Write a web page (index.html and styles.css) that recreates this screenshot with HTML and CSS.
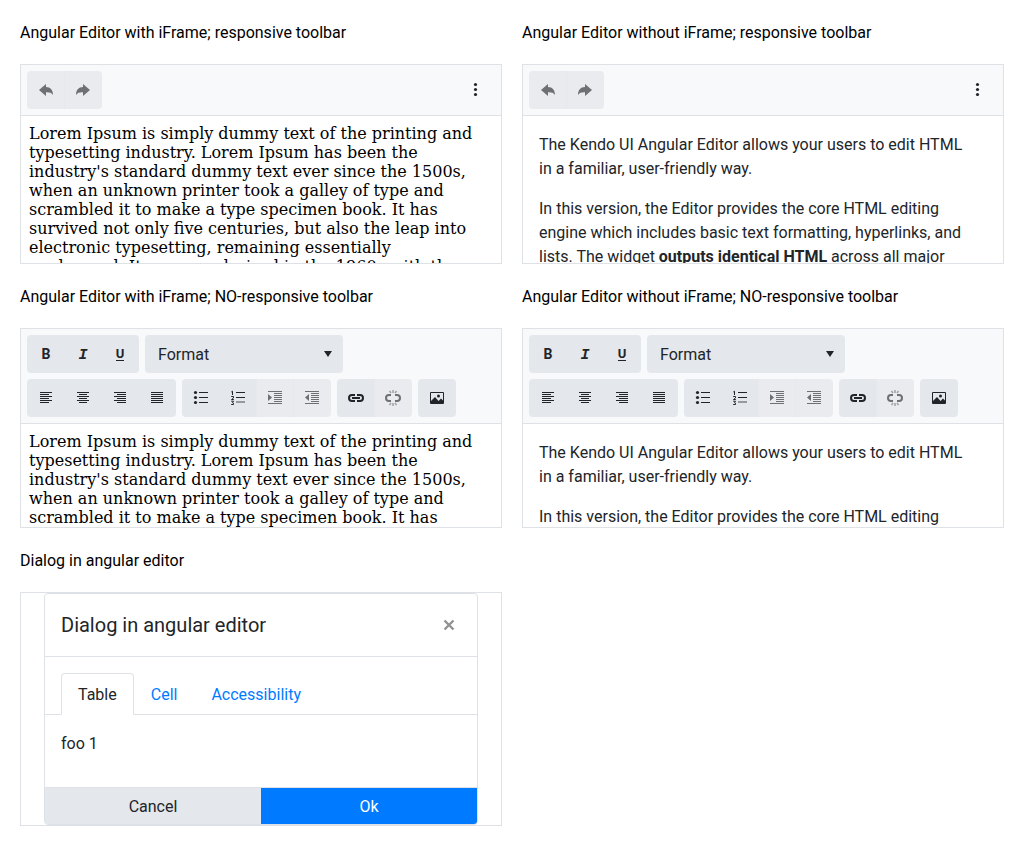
FILE: index.html
```html
<!DOCTYPE html>
<html lang="en">
<head>
<meta charset="utf-8">
<title>Angular Editor</title>
<link rel="stylesheet" href="styles.css">
</head>
<body>
<svg class="sprite" aria-hidden="true">
  <symbol id="undo" viewBox="0 0 16 16"><path d="M1 8 8 2v3c4.500 0 7 3 7 8-1.500-2.500-4-3-7-2.800V14z"/></symbol>
  <symbol id="redo" viewBox="0 0 16 16"><path d="M15 8 8 2v3c-4.500 0-7 3-7 8 1.500-2.500 4-3 7-2.800V14z"/></symbol>
  <symbol id="more" viewBox="0 0 16 16"><circle cx="7.500" cy="2.500" r="1.600"/><circle cx="7.500" cy="7.500" r="1.600"/><circle cx="7.500" cy="12.500" r="1.600"/></symbol>
  <symbol id="left" viewBox="0 0 16 16"><path d="M2 2h12v1H2zM2 4h9v1H2zM2 6h12v1H2zM2 8h9v1H2zM2 10h12v1H2zM2 12h9v1H2z"/></symbol>
  <symbol id="center" viewBox="0 0 16 16"><path d="M2 2h12v1H2zM4 4h8v1H4zM2 6h12v1H2zM4 8h8v1H4zM2 10h12v1H2zM4 12h8v1H4z"/></symbol>
  <symbol id="right" viewBox="0 0 16 16"><path d="M2 2h12v1H2zM5 4h9v1H5zM2 6h12v1H2zM5 8h9v1H5zM2 10h12v1H2zM5 12h9v1H5z"/></symbol>
  <symbol id="justify" viewBox="0 0 16 16"><path d="M2 2h12v1H2zM2 4h12v1H2zM2 6h12v1H2zM2 8h12v1H2zM2 10h12v1H2zM2 12h12v1H2z"/></symbol>
  <symbol id="bullets" viewBox="0 0 16 16"><circle cx="2.500" cy="2.500" r="1.600"/><circle cx="2.500" cy="7.500" r="1.600"/><circle cx="2.500" cy="12.500" r="1.600"/><path d="M6 2h9v1H6zM6 7h9v1H6zM6 12h9v1H6z"/></symbol>
  <symbol id="numbers" viewBox="0 0 16 16"><path d="M1.300 2 2.500 1.200V5M1.200 6.500h2.300v1.400L1.500 9.500h2.300M1.200 11.200h2.300l-1 1.500 1 .5v1.300H1.200" fill="none" stroke="currentColor"/><path d="M6 2h9v1H6zM6 7h9v1H6z"/><path d="M6 11h9v2H6z" opacity=".4"/></symbol>
  <symbol id="indent" viewBox="0 0 16 16"><path d="M1 1h14v1H1zM7 3h8v1H7zM7 5h8v1H7zM7 7h8v1H7zM7 9h8v1H7zM7 11h8v1H7zM1 13h14v1H1zM1 4l4 3.500L1 11z"/></symbol>
  <symbol id="outdent" viewBox="0 0 16 16"><path d="M1 1h14v1H1zM7 3h8v1H7zM7 5h8v1H7zM7 7h8v1H7zM7 9h8v1H7zM7 11h8v1H7zM1 13h14v1H1zM5 4 1 7.500 5 11z"/></symbol>
  <symbol id="link" viewBox="0 0 16 16"><path d="M7 5H4a3 3 0 0 0 0 6h3M9 5h3a3 3 0 0 1 0 6H9" fill="none" stroke="currentColor" stroke-width="2"/><path d="M4 7h8v2H4z"/></symbol>
  <symbol id="unlink" viewBox="0 0 16 16"><path d="M6 5H4a3 3 0 0 0 0 6h2M10 5h2a3 3 0 0 1 0 6h-2" fill="none" stroke="currentColor" stroke-width="2"/><path d="M8 0v3M4.500 1l1.500 2M11.500 1 10 3M8 13v3M4.500 15 6 13M11.500 15 10 13" fill="none" stroke="currentColor" stroke-width="1.500" opacity=".6"/></symbol>
  <symbol id="image" viewBox="0 0 16 16"><path fill-rule="evenodd" d="M1 3a1 1 0 0 1 1-1h12a1 1 0 0 1 1 1v10a1 1 0 0 1-1 1H2a1 1 0 0 1-1-1zm1 0v8l4-4 3.500 4L12 8.500l2 2V3z"/><circle cx="9.500" cy="6" r="1.500"/></symbol>
</svg>

<main class="demo">
  <section class="example">
    <h2 class="caption">Angular Editor with iFrame; responsive toolbar</h2>
    <div class="editor">
      <div class="toolbar toolbar-responsive">
        <div class="group">
          <button class="tool" aria-label="Undo" disabled><svg class="icon"><use href="#undo"/></svg></button>
          <button class="tool" aria-label="Redo" disabled><svg class="icon"><use href="#redo"/></svg></button>
        </div>
        <button class="tool overflow" aria-label="More tools"><svg class="icon"><use href="#more"/></svg></button>
      </div>
      <div class="content document">Lorem Ipsum is simply dummy text of the printing and typesetting industry. Lorem Ipsum has been the industry's standard dummy text ever since the 1500s, when an unknown printer took a galley of type and scrambled it to make a type specimen book. It has survived not only five centuries, but also the leap into electronic typesetting, remaining essentially unchanged. It was popularised in the 1960s with the</div>
    </div>
  </section>

  <section class="example">
    <h2 class="caption">Angular Editor without iFrame; responsive toolbar</h2>
    <div class="editor">
      <div class="toolbar toolbar-responsive">
        <div class="group">
          <button class="tool" aria-label="Undo" disabled><svg class="icon"><use href="#undo"/></svg></button>
          <button class="tool" aria-label="Redo" disabled><svg class="icon"><use href="#redo"/></svg></button>
        </div>
        <button class="tool overflow" aria-label="More tools"><svg class="icon"><use href="#more"/></svg></button>
      </div>
      <div class="content prose">
        <p>The Kendo UI Angular Editor allows your users to edit HTML in a familiar, user-friendly way.</p>
        <p>In this version, the Editor provides the core HTML editing engine which includes basic text formatting, hyperlinks, and lists. The widget <strong>outputs identical HTML</strong> across all major</p>
      </div>
    </div>
  </section>

  <section class="example">
    <h2 class="caption">Angular Editor with iFrame; NO-responsive toolbar</h2>
    <div class="editor">
      <div class="toolbar">
        <div class="group">
          <button class="tool bold" aria-label="Bold">B</button>
          <button class="tool italic" aria-label="Italic">I</button>
          <button class="tool underline" aria-label="Underline"><span class="underlined">U</span></button>
        </div>
        <div class="picker">
          <select class="format" aria-label="Format"><option>Format</option></select>
          <svg class="arrow" viewBox="0 0 8 6"><path d="M0 0h8L4 6z"/></svg>
        </div>
        <div class="group">
          <button class="tool" aria-label="Align left"><svg class="icon"><use href="#left"/></svg></button>
          <button class="tool" aria-label="Align center"><svg class="icon"><use href="#center"/></svg></button>
          <button class="tool" aria-label="Align right"><svg class="icon"><use href="#right"/></svg></button>
          <button class="tool" aria-label="Justify"><svg class="icon"><use href="#justify"/></svg></button>
        </div>
        <div class="group">
          <button class="tool" aria-label="Bulleted list"><svg class="icon"><use href="#bullets"/></svg></button>
          <button class="tool" aria-label="Numbered list"><svg class="icon"><use href="#numbers"/></svg></button>
          <button class="tool" aria-label="Indent" disabled><svg class="icon"><use href="#indent"/></svg></button>
          <button class="tool" aria-label="Outdent" disabled><svg class="icon"><use href="#outdent"/></svg></button>
        </div>
        <div class="group">
          <button class="tool" aria-label="Insert link"><svg class="icon"><use href="#link"/></svg></button>
          <button class="tool" aria-label="Remove link" disabled><svg class="icon"><use href="#unlink"/></svg></button>
        </div>
        <div class="group">
          <button class="tool" aria-label="Insert image"><svg class="icon"><use href="#image"/></svg></button>
        </div>
      </div>
      <div class="content document">Lorem Ipsum is simply dummy text of the printing and typesetting industry. Lorem Ipsum has been the industry's standard dummy text ever since the 1500s, when an unknown printer took a galley of type and scrambled it to make a type specimen book. It has</div>
    </div>
  </section>

  <section class="example">
    <h2 class="caption">Angular Editor without iFrame; NO-responsive toolbar</h2>
    <div class="editor">
      <div class="toolbar">
        <div class="group">
          <button class="tool bold" aria-label="Bold">B</button>
          <button class="tool italic" aria-label="Italic">I</button>
          <button class="tool underline" aria-label="Underline"><span class="underlined">U</span></button>
        </div>
        <div class="picker">
          <select class="format" aria-label="Format"><option>Format</option></select>
          <svg class="arrow" viewBox="0 0 8 6"><path d="M0 0h8L4 6z"/></svg>
        </div>
        <div class="group">
          <button class="tool" aria-label="Align left"><svg class="icon"><use href="#left"/></svg></button>
          <button class="tool" aria-label="Align center"><svg class="icon"><use href="#center"/></svg></button>
          <button class="tool" aria-label="Align right"><svg class="icon"><use href="#right"/></svg></button>
          <button class="tool" aria-label="Justify"><svg class="icon"><use href="#justify"/></svg></button>
        </div>
        <div class="group">
          <button class="tool" aria-label="Bulleted list"><svg class="icon"><use href="#bullets"/></svg></button>
          <button class="tool" aria-label="Numbered list"><svg class="icon"><use href="#numbers"/></svg></button>
          <button class="tool" aria-label="Indent" disabled><svg class="icon"><use href="#indent"/></svg></button>
          <button class="tool" aria-label="Outdent" disabled><svg class="icon"><use href="#outdent"/></svg></button>
        </div>
        <div class="group">
          <button class="tool" aria-label="Insert link"><svg class="icon"><use href="#link"/></svg></button>
          <button class="tool" aria-label="Remove link" disabled><svg class="icon"><use href="#unlink"/></svg></button>
        </div>
        <div class="group">
          <button class="tool" aria-label="Insert image"><svg class="icon"><use href="#image"/></svg></button>
        </div>
      </div>
      <div class="content prose">
        <p>The Kendo UI Angular Editor allows your users to edit HTML in a familiar, user-friendly way.</p>
        <p>In this version, the Editor provides the core HTML editing</p>
      </div>
    </div>
  </section>

  <section class="example">
    <h2 class="caption">Dialog in angular editor</h2>
    <div class="stage">
      <div class="dialog" role="dialog" aria-labelledby="dialog-title">
        <header class="dialog-header">
          <h3 class="dialog-title" id="dialog-title">Dialog in angular editor</h3>
          <button class="close" aria-label="Close"><svg class="icon" viewBox="0 0 16 16"><path d="M3.500 3.500l9 9M12.500 3.500l-9 9" stroke="currentColor" stroke-width="2.400"/></svg></button>
        </header>
        <nav class="tabs">
          <a class="tab tab-active" href="#table">Table</a>
          <a class="tab" href="#cell">Cell</a>
          <a class="tab" href="#accessibility">Accessibility</a>
        </nav>
        <div class="panel" id="table">foo 1</div>
        <footer class="actions">
          <button class="action">Cancel</button>
          <button class="action action-primary">Ok</button>
        </footer>
      </div>
    </div>
  </section>
</main>
</body>
</html>
```
FILE: styles.css
```css
* {
  box-sizing: border-box;
}

body {
  margin: 0;
  padding: 21px 20px 20px;
  background: #fff;
  color: #212529;
  font: 16px/24px Roboto, sans-serif;
}

button,
select {
  margin: 0;
  padding: 0;
  border: 0;
  background: #e4e7eb;
  color: inherit;
  font: inherit;
}

.sprite {
  display: none;
}

.demo {
  display: grid;
  grid-template-columns: repeat(2, minmax(0, 1fr));
  gap: 21px 20px;
  align-items: start;
}

.example {
  display: grid;
  gap: 19px;
}

.caption {
  margin: 0;
  color: #000;
  font-size: 16px;
  font-weight: 400;
}

.editor {
  display: flex;
  flex-direction: column;
  height: 200px;
  border: 1px solid #dee2e6;
}

.toolbar {
  display: flex;
  flex-wrap: wrap;
  flex: none;
  gap: 6px;
  padding: 6px;
  border-bottom: 1px solid #dee2e6;
  background: #f8f9fb;
}

.toolbar-responsive {
  justify-content: space-between;
}

.group {
  display: flex;
  border-radius: 4px;
  overflow: hidden;
}

.tool {
  display: flex;
  align-items: center;
  justify-content: center;
  width: 38px;
  height: 38px;
}

.tool + .tool {
  margin-left: -1px;
}

.tool:disabled {
  background: #eaebef;
  color: #6e7174;
}

.tool + .tool:disabled {
  box-shadow: inset 1px 0 #e5e8ec;
}

.overflow {
  background: none;
}

.icon {
  width: 16px;
  height: 16px;
  fill: currentColor;
}

.bold {
  font: bold 14px/16px Roboto, sans-serif;
}

.italic {
  padding-top: 3px;
  font: italic bold 15px/16px "Liberation Mono", monospace;
}

.underline {
  font: bold 13px/12px Roboto, sans-serif;
}

.underlined {
  border-bottom: 1px solid;
}

.picker {
  position: relative;
  width: 198px;
}

.format {
  width: 100%;
  height: 38px;
  padding: 2px 13px 0;
  border-radius: 4px;
  appearance: none;
}

.arrow {
  position: absolute;
  top: 16px;
  right: 11px;
  width: 8px;
  height: 6px;
  fill: currentColor;
  pointer-events: none;
}

.content {
  flex: 1;
  min-height: 0;
  overflow: hidden;
}

.document {
  padding: 8px 24px 8px 8px;
  color: #000;
  font: 16px/19px "DejaVu Serif", serif;
}

.prose {
  padding: 17px 32px 0 16px;
}

.prose p {
  margin: 0 0 16px;
}

.stage {
  padding: 0 23px;
  border: 1px solid #dee2e6;
}

.dialog {
  border: 1px solid #dee2e6;
  border-radius: 4px;
  overflow: hidden;
}

.dialog-header {
  display: flex;
  align-items: center;
  justify-content: space-between;
  padding: 16px;
  border-bottom: 1px solid #dee2e6;
}

.dialog-title {
  margin: 0;
  font-size: 20px;
  font-weight: 400;
  line-height: 30px;
}

.close {
  display: flex;
  padding: 4px;
  background: none;
  color: #909294;
}

.tabs {
  display: flex;
  padding: 16px 16px 0;
  border-bottom: 1px solid #dee2e6;
}

.tab {
  margin-bottom: -1px;
  padding: 9px 16px 7px;
  border: 1px solid transparent;
  border-radius: 4px 4px 0 0;
  color: #007bff;
  text-decoration: none;
}

.tab-active {
  border-color: #dee2e6 #dee2e6 #fff;
  background: #fff;
  color: #212529;
}

.panel {
  padding: 17px 16px 31px;
}

.actions {
  display: flex;
  border-top: 1px solid #dee2e6;
}

.action {
  flex: 1;
  height: 36px;
  padding-top: 2px;
}

.action-primary {
  background: #007bff;
  color: #fff;
}
```
